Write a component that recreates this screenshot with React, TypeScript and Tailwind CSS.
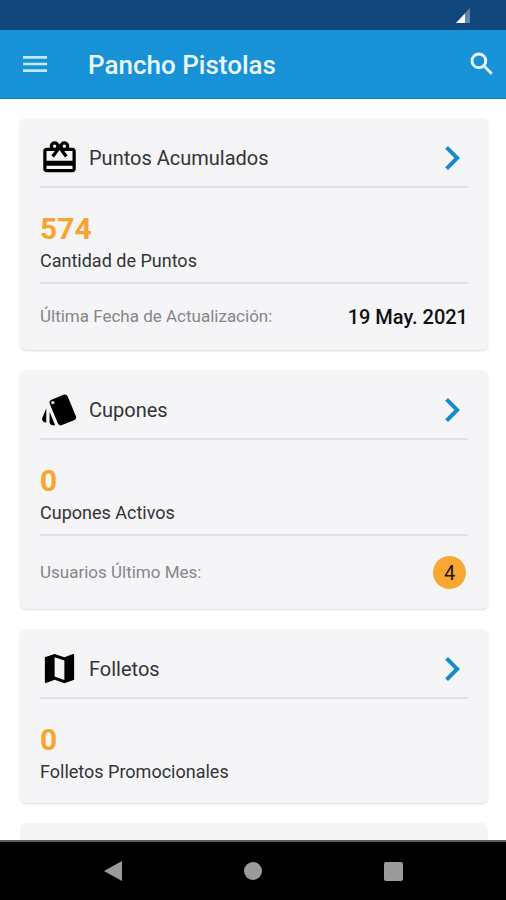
import type { ReactNode } from "react";
import { MdCardGiftcard, MdChevronRight, MdMap, MdMenu, MdStyle } from "react-icons/md";

type CardProps = {
  icon: ReactNode;
  title: string;
  value: string;
  label: string;
  children?: ReactNode;
};

function Card({ icon, title, value, label, children }: CardProps) {
  return (
    <section className="rounded-md bg-[#f5f5f8] px-5 shadow-[0_1px_2px_rgba(0,0,0,0.14)]">
      <a href="#" className="flex h-[70px] items-center border-b-2 border-[#e0e0e2] pt-[11px]">
        <span className="text-[39px] text-black">{icon}</span>
        <h2 className="ml-[10px] flex-1 text-xl text-[#333336]">{title}</h2>
        <MdChevronRight className="-mr-2 size-12 text-[#168bcb]" />
      </a>
      <div className="pt-[23px] pb-[9px]">
        <p className="text-[30px] leading-9 font-bold text-[#f9a42c]">{value}</p>
        <p className="mt-0.5 text-lg leading-6 text-[#333336]">{label}</p>
      </div>
      {children}
    </section>
  );
}

export default function App() {
  return (
    <div className="flex h-screen flex-col bg-white font-[Roboto,sans-serif]">
      <div className="flex h-[30px] shrink-0 items-center justify-end bg-[#10487d] pr-9">
        <svg viewBox="0 0 14 15" className="h-[15px] w-[14px]" aria-hidden="true">
          <path d="M14 0v15H0z" fill="#5f87ad" />
          <path d="M9 5.4V15H0z" fill="#fff" />
        </svg>
      </div>

      <header className="flex h-[69px] shrink-0 items-center border-b border-[#0f7fbf] bg-[#1892d7] pr-[9px] pl-[19px] text-[#eaf7ff]">
        <button type="button" aria-label="Menú">
          <MdMenu className="size-8 text-[#c5e9fc]" />
        </button>
        <h1 className="ml-[37px] flex-1 pt-0.5 text-[26px] leading-8 font-medium">Pancho Pistolas</h1>
        <button type="button" aria-label="Buscar">
          <svg viewBox="0 0 24 24" className="size-[30px]" fill="none" stroke="currentColor" strokeWidth="2.3">
            <circle cx="9.5" cy="9.5" r="5.5" />
            <path d="M13.8 13.8l6 6" />
          </svg>
        </button>
      </header>

      <main className="flex min-h-0 flex-1 flex-col gap-5 overflow-y-auto pt-[19px] pr-[18px] pl-5 [scrollbar-width:none] *:shrink-0">
        <Card icon={<MdCardGiftcard />} title="Puntos Acumulados" value="574" label="Cantidad de Puntos">
          <div className="flex h-[68px] items-center justify-between border-t-2 border-[#e0e0e2]">
            <span className="text-[17px] text-[#86868a]">Última Fecha de Actualización:</span>
            <strong className="text-xl font-medium text-[#111113]">19 May. 2021</strong>
          </div>
        </Card>

        <Card icon={<MdStyle />} title="Cupones" value="0" label="Cupones Activos">
          <div className="flex h-[75px] items-center justify-between border-t-2 border-[#e0e0e2]">
            <span className="text-[17px] text-[#86868a]">Usuarios Último Mes:</span>
            <span className="mr-0.5 flex size-[33px] items-center justify-center rounded-full bg-[#f9a733] text-xl text-[#1c1608]">
              4
            </span>
          </div>
        </Card>

        <Card icon={<MdMap />} title="Folletos" value="0" label="Folletos Promocionales">
          <div className="h-[10px]" />
        </Card>

        <section className="h-20 rounded-md bg-[#f5f5f8]" />
      </main>

      <nav className="flex h-[60px] shrink-0 items-center justify-center gap-[102px] border-t-2 border-[#5c5e60] bg-black text-[#9b9b9b]">
        <button type="button" aria-label="Atrás" className="flex w-[38px] justify-center">
          <svg viewBox="0 0 20 22" className="h-[22px] w-5" fill="currentColor">
            <path d="M19 1v20L1 11z" />
          </svg>
        </button>
        <button type="button" aria-label="Inicio" className="flex w-[38px] justify-center">
          <span className="size-[18px] rounded-full bg-current" />
        </button>
        <button type="button" aria-label="Recientes" className="flex w-[38px] justify-center">
          <span className="size-[19px] rounded-xs bg-current" />
        </button>
      </nav>
    </div>
  );
}
